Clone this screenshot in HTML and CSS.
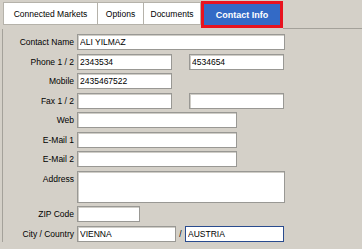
FILE: index.html
```html
<!DOCTYPE html>
<html lang="en">
<head>
  <meta charset="UTF-8" />
  <title>Contact Info</title>
  <link rel="stylesheet" href="styles.css">
</head>
<body>
  <div class="window">
    <div class="tabs">
      <div class="tab tab-markets">Connected Markets</div>
      <div class="tab tab-options">Options</div>
      <div class="tab tab-documents">Documents</div>
      <div class="tab active">Contact Info</div>
      <div class="tab-fill"></div>
    </div>

    <div class="panel">
      <div class="row">
        <label>Contact Name</label>
        <input class="w-long" type="text" value="ALI YILMAZ">
      </div>
      <div class="row">
        <label>Phone 1 / 2</label>
        <input class="w-short" type="text" value="2343534">
        <input class="w-short second" type="text" value="4534654">
      </div>
      <div class="row">
        <label>Mobile</label>
        <input class="w-short" type="text" value="2435467522">
      </div>
      <div class="row">
        <label>Fax 1 / 2</label>
        <input class="w-short" type="text" value="">
        <input class="w-short second" type="text" value="">
      </div>
      <div class="row">
        <label>Web</label>
        <input class="w-mid" type="text" value="">
      </div>
      <div class="row">
        <label>E-Mail 1</label>
        <input class="w-mid" type="text" value="">
      </div>
      <div class="row">
        <label>E-Mail 2</label>
        <input class="w-mid" type="text" value="">
      </div>
      <div class="row row-top">
        <label>Address</label>
        <textarea class="w-long address"></textarea>
      </div>
      <div class="row">
        <label>ZIP Code</label>
        <input class="w-zip" type="text" value="">
      </div>
      <div class="row">
        <label>City / Country</label>
        <input class="w-city" type="text" value="VIENNA">
        <span class="slash">/</span>
        <input class="w-city focused" type="text" value="AUSTRIA">
      </div>
    </div>
  </div>
</body>
</html>
```

FILE: styles.css
```css
body {
  margin: 0;
  background-color: #d4d0c8;
  font-family: "Liberation Sans", Arial, sans-serif;
  font-size: 8.5px;
  color: #000;
}

.window {
  width: 362px;
  height: 249px;
  overflow: hidden;
}

.tabs {
  display: flex;
  align-items: flex-start;
  height: 29px;
  padding-left: 3px;
  box-sizing: border-box;
}

.tab {
  box-sizing: border-box;
  height: 23px;
  margin-top: 2px;
  background: #fff;
  border: 1px solid #b5b2aa;
  border-right: none;
  display: flex;
  align-items: center;
  justify-content: center;
  white-space: nowrap;
}

.tab-markets { width: 94px; }
.tab-options { width: 46px; }
.tab-documents { width: 58px; border-right: 1px solid #b5b2aa; }

.tab.active {
  width: 82px;
  height: 27px;
  margin-top: 1px;
  background: #336ac6;
  color: #fff;
  font-weight: bold;
  font-size: 9px;
  border: 3px solid #e8131f;
}

.tab-fill {
  flex: 1;
  align-self: stretch;
  border-bottom: 1px solid #a4a19a;
}

.panel {
  margin-left: 2px;
  border-left: 1px solid #a4a19a;
  padding-top: 5px;
  display: flex;
  flex-direction: column;
  gap: 3.5px;
}

.row {
  display: flex;
  align-items: center;
}

.row-top {
  align-items: flex-start;
}

.row-top label {
  padding-top: 3px;
}

.row label {
  width: 71px;
  margin-right: 3px;
  text-align: right;
  white-space: nowrap;
}

input, textarea {
  box-sizing: border-box;
  height: 16px;
  margin: 0;
  padding: 0 2px;
  font-family: inherit;
  font-size: 8.5px;
  color: #000;
  background: #fff;
  border: 1px solid #999894;
  box-shadow: inset 1px 1px 0 #cfcdc7;
  border-radius: 0;
  outline: none;
}

textarea {
  resize: none;
}

.w-long { width: 208px; }
.w-short { width: 95px; }
.w-mid { width: 160px; }
.w-zip { width: 63px; }
.w-city { width: 99px; }

.second {
  margin-left: 17px;
}

.address {
  height: 32px;
}

.slash {
  width: 9px;
  text-align: center;
}

.focused {
  border-color: #2a4b8e;
  box-shadow: none;
}
```
